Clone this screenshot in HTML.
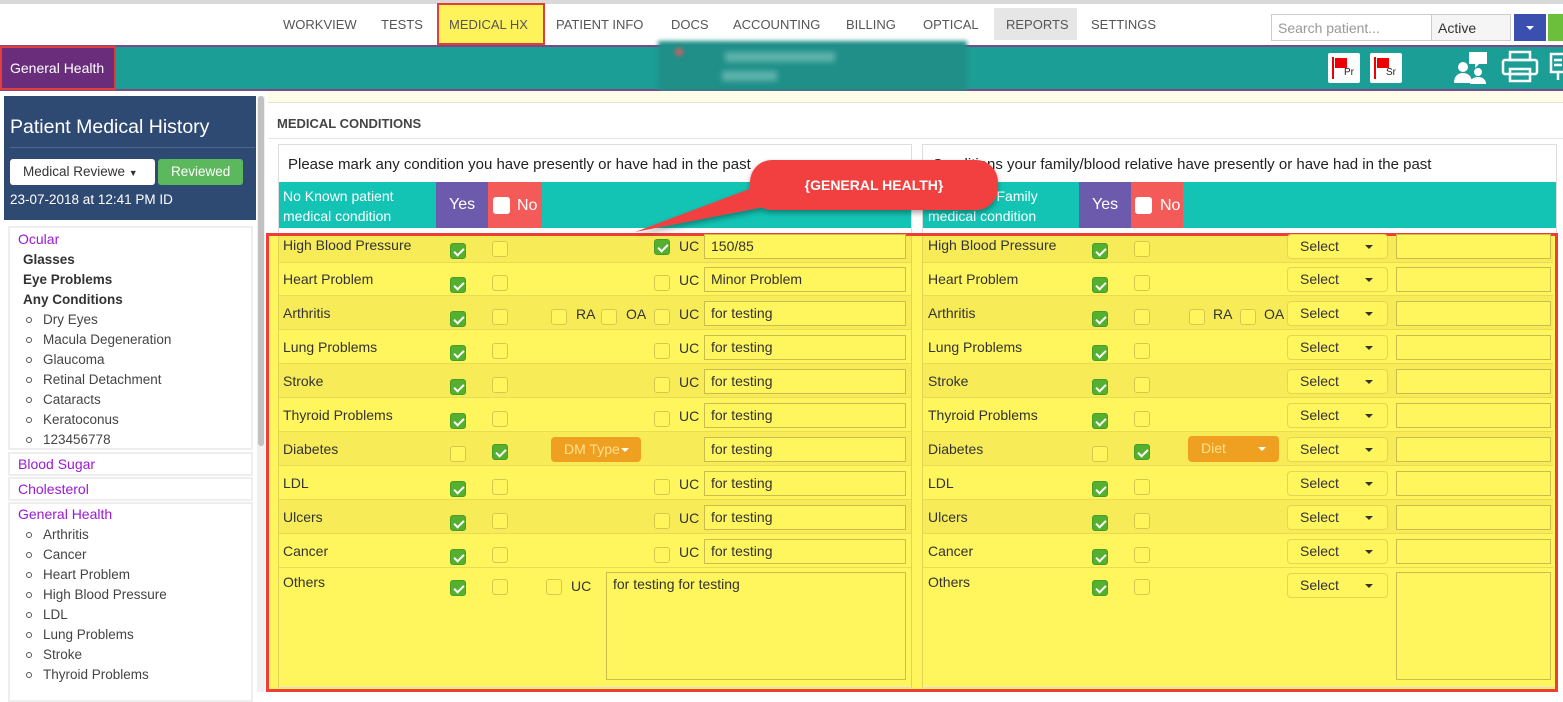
<!DOCTYPE html>
<html><head><meta charset="utf-8"><style>
*{box-sizing:border-box;margin:0;padding:0}
body{width:1563px;height:692px;overflow:hidden;background:#fff;font-family:"Liberation Sans",sans-serif;font-size:14px;color:#333;position:relative}
.a{position:absolute}
.nav{top:17px;font-size:13px;color:#555}
.cb{position:absolute;width:16px;height:16px;border:1px solid #d4c94e;border-radius:3px;background:#fff65e}
.ck{background:#55b02f;border-color:#4a9c28}
.ck:after{content:"";position:absolute;left:5px;top:2px;width:4px;height:8px;border:solid #fff;border-width:0 2px 2px 0;transform:rotate(45deg)}
.row{position:absolute;height:34px;border-bottom:1px solid #e8dc55}
.lbl{position:absolute;font-size:14px;color:#333}
.inp{position:absolute;height:25px;border:1px solid #c9bd4c;background:#fff55c;font-size:14px;padding:3px 6px;color:#333}
.sel{position:absolute;height:25px;border:1px solid #e2d650;border-radius:4px;background:#fff55c;font-size:14px;padding:3px 12px;color:#333;width:101px}
.sel:after{content:"";position:absolute;right:14px;top:10px;border:4px solid transparent;border-top-color:#333;border-bottom:0}
.side{font-size:13.5px;color:#444;position:absolute;left:43px}
.dot{position:absolute;left:26px;width:6px;height:6px;border:1px solid #555;border-radius:50%}
.hd{position:absolute;left:18px;font-size:14px;color:#9b19d4}
.btn{position:absolute;height:25px;background:#f0a020;border-radius:4px;color:#ffe08a;font-size:14px;padding:4px 13px;white-space:nowrap;overflow:hidden}
.btn i{position:absolute;top:11px;border:4px solid transparent;border-top-color:#fff;border-bottom:0}
</style></head><body>
<div class="a" style="left:0;top:0;width:1563px;height:4px;background:#d9d9d9"></div>
<div class="a" style="left:437px;top:3px;width:108px;height:42px;background:#fef35a;border:2px solid #e63b3b"></div>
<div class="a" style="left:994px;top:8px;width:83px;height:32px;background:#e6e6e6"></div>
<span class="a nav" style="left:283px">WORKVIEW</span>
<span class="a nav" style="left:381px">TESTS</span>
<span class="a nav" style="left:449px">MEDICAL HX</span>
<span class="a nav" style="left:556px">PATIENT INFO</span>
<span class="a nav" style="left:671px">DOCS</span>
<span class="a nav" style="left:733px">ACCOUNTING</span>
<span class="a nav" style="left:846px">BILLING</span>
<span class="a nav" style="left:923px">OPTICAL</span>
<span class="a nav" style="left:1006px">REPORTS</span>
<span class="a nav" style="left:1091px">SETTINGS</span>
<div class="a" style="left:1271px;top:14px;width:161px;height:27px;border:1px solid #ccc;color:#999;padding:5px 6px;font-size:14px">Search patient...</div>
<div class="a" style="left:1431px;top:14px;width:80px;height:27px;border:1px solid #ccc;background:#f5f5f5;padding:5px 6px;font-size:14px;color:#333">Active</div>
<div class="a" style="left:1514px;top:14px;width:32px;height:27px;background:#3a4fb0"><div class="a" style="left:12px;top:12px;border:4px solid transparent;border-top-color:#fff;border-bottom:0"></div></div>
<div class="a" style="left:1548px;top:14px;width:15px;height:27px;background:#6cbf3a"></div>
<!-- teal bar -->
<div class="a" style="left:0;top:45px;width:1563px;height:46px;background:#1a9e96;border-top:2px solid #7a4a86;border-bottom:2px solid #7a4a86"></div>
<div class="a" style="left:658px;top:41px;width:309px;height:50px;background:#1f8f88;filter:blur(2px)"></div>
<div class="a" style="left:675px;top:48px;width:8px;height:8px;background:#d06060;border-radius:50%;filter:blur(2px)"></div>
<div class="a" style="left:725px;top:52px;width:110px;height:10px;background:#5fb3ad;filter:blur(3px)"></div>
<div class="a" style="left:722px;top:71px;width:55px;height:10px;background:#5fb3ad;filter:blur(3px)"></div>
<div class="a" style="left:0;top:46px;width:116px;height:44px;background:#6a2d7c;border:2px solid #e63b3b;color:#fff;font-size:14px;padding:12px 8px">General Health</div>
<div class="a" style="left:1328px;top:53px;width:32px;height:30px;background:#fff;border-radius:2px"><div class="a" style="left:4px;top:4px;width:2px;height:22px;background:#e00"></div><div class="a" style="left:7px;top:5px;width:12px;height:10px;background:#e00"></div><span class="a" style="left:16px;top:14px;font-size:10px;color:#222">Pr</span></div>
<div class="a" style="left:1370px;top:53px;width:32px;height:30px;background:#fff;border-radius:2px"><div class="a" style="left:4px;top:4px;width:2px;height:22px;background:#e00"></div><div class="a" style="left:7px;top:5px;width:12px;height:10px;background:#e00"></div><span class="a" style="left:16px;top:14px;font-size:10px;color:#222">Sr</span></div>
<svg class="a" style="left:1453px;top:50px" width="38" height="36" viewBox="0 0 38 36" fill="#fff"><circle cx="10" cy="17" r="5"/><path d="M1 33c0-7 4-10 9-10s9 3 9 10z"/><circle cx="25" cy="22" r="4"/><path d="M17 34c0-5 4-7 8-7s8 2 8 7z"/><path d="M16 2h18v12h-8l-4 4v-4h-6z"/></svg>
<svg class="a" style="left:1501px;top:50px" width="38" height="34" viewBox="0 0 38 34" fill="none" stroke="#fff" stroke-width="2.5"><rect x="9" y="2" width="20" height="8"/><rect x="2" y="10" width="34" height="14" rx="2"/><rect x="9" y="19" width="20" height="12"/><line x1="13" y1="24" x2="25" y2="24"/></svg>
<svg class="a" style="left:1548px;top:50px" width="15" height="34" viewBox="0 0 15 34" fill="none" stroke="#fff" stroke-width="2.5"><rect x="3" y="4" width="16" height="18"/><line x1="6" y1="10" x2="14" y2="10"/><line x1="6" y1="15" x2="14" y2="15"/><line x1="10" y1="22" x2="10" y2="30"/></svg>
<!-- sidebar -->
<div class="a" style="left:4px;top:96px;width:252px;height:124px;background:#2e4a73"></div>
<div class="a" style="left:10px;top:116px;color:#fff;font-size:19.5px">Patient Medical History</div>
<div class="a" style="left:10px;top:147px;width:245px;height:1px;background:#4d6790"></div>
<div class="a" style="left:10px;top:159px;width:145px;height:26px;background:#fff;border-radius:3px;font-size:13.5px;color:#333;padding:5px 13px">Medical Reviewe <span style="font-size:9px">▼</span></div>
<div class="a" style="left:158px;top:159px;width:85px;height:26px;background:#5cb85c;border-radius:3px;color:#fff;font-size:13.5px;padding:5px 13px">Reviewed</div>
<div class="a" style="left:10px;top:192px;color:#fff;font-size:13.5px">23-07-2018 at 12:41 PM ID</div>
<div class="a" style="left:257px;top:96px;width:8px;height:596px;background:#f0f0f0"></div>
<div class="a" style="left:258px;top:96px;width:6px;height:350px;background:#c1c1c1;border-radius:3px"></div>
<div class="a" style="left:8px;top:226px;width:245px;height:224px;border:2px solid #eee"></div>
<div class="a" style="left:8px;top:452px;width:245px;height:24px;border:2px solid #eee"></div>
<div class="a" style="left:8px;top:477px;width:245px;height:24px;border:2px solid #eee"></div>
<div class="a" style="left:8px;top:502px;width:245px;height:200px;border:2px solid #eee"></div>
<div class="hd" style="top:231px">Ocular</div>
<div class="a" style="left:23px;top:252px;font-weight:bold;font-size:13.5px;color:#333">Glasses</div>
<div class="a" style="left:23px;top:272px;font-weight:bold;font-size:13.5px;color:#333">Eye Problems</div>
<div class="a" style="left:23px;top:292px;font-weight:bold;font-size:13.5px;color:#333">Any Conditions</div>
<div class="dot" style="top:317px"></div><div class="side" style="top:312px">Dry Eyes</div>
<div class="dot" style="top:337px"></div><div class="side" style="top:332px">Macula Degeneration</div>
<div class="dot" style="top:357px"></div><div class="side" style="top:352px">Glaucoma</div>
<div class="dot" style="top:377px"></div><div class="side" style="top:372px">Retinal Detachment</div>
<div class="dot" style="top:397px"></div><div class="side" style="top:392px">Cataracts</div>
<div class="dot" style="top:417px"></div><div class="side" style="top:412px">Keratoconus</div>
<div class="dot" style="top:437px"></div><div class="side" style="top:432px">123456778</div>
<div class="hd" style="top:456px">Blood Sugar</div>
<div class="hd" style="top:481px">Cholesterol</div>
<div class="hd" style="top:506px">General Health</div>
<div class="dot" style="top:532px"></div><div class="side" style="top:527px">Arthritis</div>
<div class="dot" style="top:552px"></div><div class="side" style="top:547px">Cancer</div>
<div class="dot" style="top:572px"></div><div class="side" style="top:567px">Heart Problem</div>
<div class="dot" style="top:592px"></div><div class="side" style="top:587px">High Blood Pressure</div>
<div class="dot" style="top:612px"></div><div class="side" style="top:607px">LDL</div>
<div class="dot" style="top:632px"></div><div class="side" style="top:627px">Lung Problems</div>
<div class="dot" style="top:652px"></div><div class="side" style="top:647px">Stroke</div>
<div class="dot" style="top:672px"></div><div class="side" style="top:667px">Thyroid Problems</div>
<!-- main -->
<div class="a" style="left:268px;top:91px;width:1295px;height:12px;background:#fffdea;border-bottom:1px solid #e8e4c8"></div>
<div class="a" style="left:277px;top:116px;font-weight:bold;font-size:13px;color:#444">MEDICAL CONDITIONS</div>
<div class="a" style="left:268px;top:138px;width:1295px;height:1px;background:#e5e5e5"></div>
<div class="a" style="left:278px;top:144px;width:634px;height:548px;border:1px solid #ddd"></div>
<div class="a" style="left:922px;top:144px;width:635px;height:548px;border:1px solid #ddd"></div>
<div class="a" style="left:288px;top:156px;font-size:15px;color:#222">Please mark any condition you have presently or have had in the past</div>
<div class="a" style="left:932px;top:156px;font-size:15px;color:#222">Conditions your family/blood relative have presently or have had in the past</div>
<div class="a" style="left:279px;top:182px;width:632px;height:46px;background:#13c4b4"></div>
<div class="a" style="left:283px;top:186px;color:#fff;font-size:14px;line-height:20px">No Known patient<br>medical condition</div>
<div class="a" style="left:436px;top:182px;width:52px;height:46px;background:#6c5bad;color:#fff;font-size:16px;padding:14px 13px">Yes</div>
<div class="a" style="left:488px;top:182px;width:54px;height:46px;background:#f35a58;color:#fff;font-size:16px;padding:15px 0 0 29px">No</div>
<div class="a" style="left:493px;top:197px;width:17px;height:17px;background:#fff;border-radius:3px"></div>
<div class="a" style="left:923px;top:182px;width:633px;height:46px;background:#13c4b4"></div>
<div class="a" style="left:928px;top:186px;color:#fff;font-size:14px;line-height:20px">No Known Family<br>medical condition</div>
<div class="a" style="left:1079px;top:182px;width:52px;height:46px;background:#6c5bad;color:#fff;font-size:16px;padding:14px 13px">Yes</div>
<div class="a" style="left:1131px;top:182px;width:52px;height:46px;background:#f35a58;color:#fff;font-size:16px;padding:15px 0 0 29px">No</div>
<div class="a" style="left:1135px;top:197px;width:17px;height:17px;background:#fff;border-radius:3px"></div>
<!-- yellow region -->
<div class="a" style="left:266px;top:233px;width:1292px;height:459px;background:#fff55c;border:3px solid #ef3e36"></div>
<div class="a" style="left:278px;top:236px;width:634px;height:452px;border-left:1px solid #e0d454;border-right:1px solid #e0d454;border-bottom:1px solid #ddd"></div>
<div class="a" style="left:922px;top:236px;width:632px;height:452px;border-left:1px solid #e0d454;border-bottom:1px solid #ddd"></div>

<!-- stripes -->
<div class="row" style="left:279px;width:632px;background:#f7ec58;top:236px;height:27px"></div>
<div class="row" style="left:923px;width:630px;background:#f7ec58;top:236px;height:27px"></div>
<div class="row" style="left:279px;top:296px;width:632px;background:#f7ec58"></div>
<div class="row" style="left:923px;top:296px;width:630px;background:#f7ec58"></div>
<div class="row" style="left:279px;top:364px;width:632px;background:#f7ec58"></div>
<div class="row" style="left:923px;top:364px;width:630px;background:#f7ec58"></div>
<div class="row" style="left:279px;top:432px;width:632px;background:#f7ec58"></div>
<div class="row" style="left:923px;top:432px;width:630px;background:#f7ec58"></div>
<div class="row" style="left:279px;top:500px;width:632px;background:#f7ec58"></div>
<div class="row" style="left:923px;top:500px;width:630px;background:#f7ec58"></div>
<div class="row" style="left:279px;top:262px;width:632px"></div><div class="row" style="left:923px;top:262px;width:630px"></div>
<div class="row" style="left:279px;top:330px;width:632px"></div><div class="row" style="left:923px;top:330px;width:630px"></div>
<div class="row" style="left:279px;top:398px;width:632px"></div><div class="row" style="left:923px;top:398px;width:630px"></div>
<div class="row" style="left:279px;top:466px;width:632px"></div><div class="row" style="left:923px;top:466px;width:630px"></div>
<div class="row" style="left:279px;top:534px;width:632px"></div><div class="row" style="left:923px;top:534px;width:630px"></div>

<!-- Left rows -->
<div class="lbl" style="left:283px;top:237px">High Blood Pressure</div><div class="cb ck" style="left:450px;top:243px"></div><div class="cb" style="left:492px;top:241px"></div><div class="cb ck" style="left:654px;top:239px"></div><div class="lbl" style="left:679px;top:238px">UC</div><div class="inp" style="left:704px;top:234px;width:202px">150/85</div>
<div class="lbl" style="left:283px;top:271px">Heart Problem</div><div class="cb ck" style="left:450px;top:277px"></div><div class="cb" style="left:492px;top:275px"></div><div class="cb" style="left:654px;top:275px"></div><div class="lbl" style="left:679px;top:272px">UC</div><div class="inp" style="left:704px;top:267px;width:202px">Minor Problem</div>
<div class="lbl" style="left:283px;top:305px">Arthritis</div><div class="cb ck" style="left:450px;top:311px"></div><div class="cb" style="left:492px;top:309px"></div><div class="cb" style="left:551px;top:309px"></div><div class="lbl" style="left:576px;top:306px">RA</div><div class="cb" style="left:601px;top:309px"></div><div class="lbl" style="left:626px;top:306px">OA</div><div class="cb" style="left:654px;top:309px"></div><div class="lbl" style="left:679px;top:306px">UC</div><div class="inp" style="left:704px;top:301px;width:202px">for testing</div>
<div class="lbl" style="left:283px;top:339px">Lung Problems</div><div class="cb ck" style="left:450px;top:345px"></div><div class="cb" style="left:492px;top:343px"></div><div class="cb" style="left:654px;top:343px"></div><div class="lbl" style="left:679px;top:340px">UC</div><div class="inp" style="left:704px;top:335px;width:202px">for testing</div>
<div class="lbl" style="left:283px;top:373px">Stroke</div><div class="cb ck" style="left:450px;top:379px"></div><div class="cb" style="left:492px;top:377px"></div><div class="cb" style="left:654px;top:377px"></div><div class="lbl" style="left:679px;top:374px">UC</div><div class="inp" style="left:704px;top:369px;width:202px">for testing</div>
<div class="lbl" style="left:283px;top:407px">Thyroid Problems</div><div class="cb ck" style="left:450px;top:413px"></div><div class="cb" style="left:492px;top:411px"></div><div class="cb" style="left:654px;top:411px"></div><div class="lbl" style="left:679px;top:408px">UC</div><div class="inp" style="left:704px;top:403px;width:202px">for testing</div>
<div class="lbl" style="left:283px;top:441px">Diabetes</div><div class="cb" style="left:450px;top:446px"></div><div class="cb ck" style="left:492px;top:444px"></div><div class="btn" style="left:551px;top:437px;width:90px">DM Type<i style="left:70px"></i></div><div class="inp" style="left:704px;top:437px;width:202px">for testing</div>
<div class="lbl" style="left:283px;top:475px">LDL</div><div class="cb ck" style="left:450px;top:481px"></div><div class="cb" style="left:492px;top:479px"></div><div class="cb" style="left:654px;top:479px"></div><div class="lbl" style="left:679px;top:476px">UC</div><div class="inp" style="left:704px;top:471px;width:202px">for testing</div>
<div class="lbl" style="left:283px;top:509px">Ulcers</div><div class="cb ck" style="left:450px;top:515px"></div><div class="cb" style="left:492px;top:513px"></div><div class="cb" style="left:654px;top:513px"></div><div class="lbl" style="left:679px;top:510px">UC</div><div class="inp" style="left:704px;top:505px;width:202px">for testing</div>
<div class="lbl" style="left:283px;top:543px">Cancer</div><div class="cb ck" style="left:450px;top:549px"></div><div class="cb" style="left:492px;top:547px"></div><div class="cb" style="left:654px;top:547px"></div><div class="lbl" style="left:679px;top:544px">UC</div><div class="inp" style="left:704px;top:539px;width:202px">for testing</div>
<div class="lbl" style="left:283px;top:574px">Others</div><div class="cb ck" style="left:450px;top:580px"></div><div class="cb" style="left:492px;top:579px"></div><div class="cb" style="left:546px;top:579px"></div><div class="lbl" style="left:571px;top:578px">UC</div><div class="inp" style="left:606px;top:572px;width:300px;height:108px">for testing for testing</div>

<!-- Right rows -->
<div class="lbl" style="left:928px;top:237px">High Blood Pressure</div><div class="cb ck" style="left:1092px;top:243px"></div><div class="cb" style="left:1134px;top:241px"></div><div class="sel" style="left:1287px;top:234px">Select</div><div class="inp" style="left:1396px;top:234px;width:155px"></div>
<div class="lbl" style="left:928px;top:271px">Heart Problem</div><div class="cb ck" style="left:1092px;top:277px"></div><div class="cb" style="left:1134px;top:275px"></div><div class="sel" style="left:1287px;top:267px">Select</div><div class="inp" style="left:1396px;top:267px;width:155px"></div>
<div class="lbl" style="left:928px;top:305px">Arthritis</div><div class="cb ck" style="left:1092px;top:311px"></div><div class="cb" style="left:1134px;top:309px"></div><div class="cb" style="left:1189px;top:309px"></div><div class="lbl" style="left:1213px;top:306px">RA</div><div class="cb" style="left:1240px;top:309px"></div><div class="lbl" style="left:1264px;top:306px">OA</div><div class="sel" style="left:1287px;top:301px">Select</div><div class="inp" style="left:1396px;top:301px;width:155px"></div>
<div class="lbl" style="left:928px;top:339px">Lung Problems</div><div class="cb ck" style="left:1092px;top:345px"></div><div class="cb" style="left:1134px;top:343px"></div><div class="sel" style="left:1287px;top:335px">Select</div><div class="inp" style="left:1396px;top:335px;width:155px"></div>
<div class="lbl" style="left:928px;top:373px">Stroke</div><div class="cb ck" style="left:1092px;top:379px"></div><div class="cb" style="left:1134px;top:377px"></div><div class="sel" style="left:1287px;top:369px">Select</div><div class="inp" style="left:1396px;top:369px;width:155px"></div>
<div class="lbl" style="left:928px;top:407px">Thyroid Problems</div><div class="cb ck" style="left:1092px;top:413px"></div><div class="cb" style="left:1134px;top:411px"></div><div class="sel" style="left:1287px;top:403px">Select</div><div class="inp" style="left:1396px;top:403px;width:155px"></div>
<div class="lbl" style="left:928px;top:441px">Diabetes</div><div class="cb" style="left:1092px;top:446px"></div><div class="cb ck" style="left:1134px;top:444px"></div><div class="btn" style="left:1188px;top:436px;width:91px;height:26px">Diet<i style="left:70px"></i></div><div class="sel" style="left:1287px;top:437px">Select</div><div class="inp" style="left:1396px;top:437px;width:155px"></div>
<div class="lbl" style="left:928px;top:475px">LDL</div><div class="cb ck" style="left:1092px;top:481px"></div><div class="cb" style="left:1134px;top:479px"></div><div class="sel" style="left:1287px;top:471px">Select</div><div class="inp" style="left:1396px;top:471px;width:155px"></div>
<div class="lbl" style="left:928px;top:509px">Ulcers</div><div class="cb ck" style="left:1092px;top:515px"></div><div class="cb" style="left:1134px;top:513px"></div><div class="sel" style="left:1287px;top:505px">Select</div><div class="inp" style="left:1396px;top:505px;width:155px"></div>
<div class="lbl" style="left:928px;top:543px">Cancer</div><div class="cb ck" style="left:1092px;top:549px"></div><div class="cb" style="left:1134px;top:547px"></div><div class="sel" style="left:1287px;top:539px">Select</div><div class="inp" style="left:1396px;top:539px;width:155px"></div>
<div class="lbl" style="left:928px;top:574px">Others</div><div class="cb ck" style="left:1092px;top:580px"></div><div class="cb" style="left:1134px;top:579px"></div><div class="sel" style="left:1287px;top:573px">Select</div><div class="inp" style="left:1396px;top:572px;width:155px;height:108px"></div>

<!-- callout -->
<svg class="a" style="left:620px;top:155px" width="390" height="85" viewBox="0 0 390 85">
<defs><filter id="s" x="-10%" y="-20%" width="120%" height="150%"><feDropShadow dx="0" dy="3" stdDeviation="3" flood-opacity="0.35"/></filter></defs>
<g filter="url(#s)" fill="#f2403f"><path d="M140 30 L15 77 L165 48 Z"/><rect x="130" y="5" width="248" height="50" rx="22"/></g>
<text x="254" y="35" fill="#fff" font-family="Liberation Sans,sans-serif" font-weight="bold" font-size="14" text-anchor="middle">{GENERAL HEALTH}</text>
</svg>
</body></html>
